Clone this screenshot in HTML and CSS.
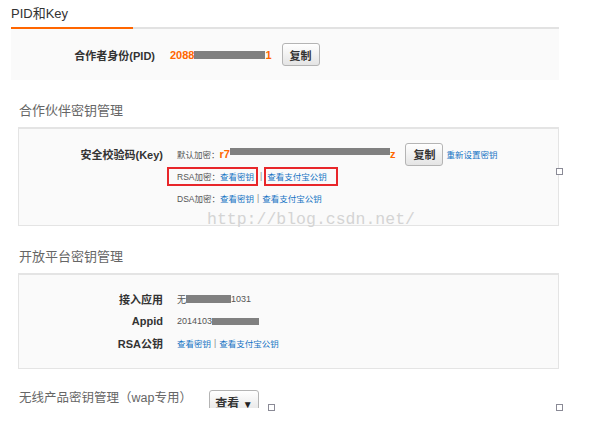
FILE: index.html
```html
<!DOCTYPE html>
<html lang="zh-CN">
<head>
  <meta charset="UTF-8" />
  <title>PID和Key</title>
  <link rel="stylesheet" href="styles.css">
</head>
<body>
  <div class="page">
    <div class="tabs">
      <div class="tab">PID和Key</div>
      <div class="tab-rest"></div>
    </div>

    <div class="box box-pid">
      <div class="row">
        <div class="label">合作者身份(PID)</div>
        <div class="value">
          <span class="orange">2088</span><span class="mask mask-pid"></span><span class="orange">1</span>
          <button class="btn">复制</button>
        </div>
      </div>
    </div>

    <h2 class="section-title">合作伙伴密钥管理</h2>
    <div class="box box-key">
      <div class="row">
        <div class="label">安全校验码(Key)</div>
        <div class="value small">
          默认加密：<span class="orange">r7</span><span class="mask mask-key"></span><span class="orange">z</span>
          <button class="btn">复制</button>
          <a class="link reset" href="#">重新设置密钥</a>
        </div>
      </div>
      <div class="row">
        <div class="label"></div>
        <div class="value small">
          <span class="mark mark-first">RSA加密：<a class="link" href="#">查看密钥</a></span><span class="sep sep-tight">|</span><span class="mark mark-second"><a class="link" href="#">查看支付宝公钥</a></span>
        </div>
      </div>
      <div class="row">
        <div class="label"></div>
        <div class="value small">
          DSA加密：<a class="link" href="#">查看密钥</a><span class="sep">|</span><a class="link" href="#">查看支付宝公钥</a>
        </div>
      </div>
      <div class="watermark">http://blog.csdn.net/</div>
    </div>

    <h2 class="section-title">开放平台密钥管理</h2>
    <div class="box box-open">
      <div class="row">
        <div class="label">接入应用</div>
        <div class="value small grey">无<span class="mask mask-app"></span>1031</div>
      </div>
      <div class="row">
        <div class="label">Appid</div>
        <div class="value small grey">2014103<span class="mask mask-appid"></span></div>
      </div>
      <div class="row">
        <div class="label">RSA公钥</div>
        <div class="value small">
          <a class="link" href="#">查看密钥</a><span class="sep">|</span><a class="link" href="#">查看支付宝公钥</a>
        </div>
      </div>
    </div>

    <div class="wap">
      <h2 class="section-title">无线产品密钥管理（wap专用）</h2>
      <button class="btn btn-drop">查看 <span class="caret">▼</span></button>
    </div>
  </div>

  <span class="handle handle-mid"></span>
  <span class="handle handle-bottom-c"></span>
  <span class="handle handle-bottom-r"></span>
</body>
</html>
```

FILE: styles.css
```css
body {
  margin: 0;
  font-family: "Liberation Sans", "Noto Sans CJK SC", sans-serif;
  color: #333;
  background: #fff;
}

.page {
  position: relative;
  height: 408px;
  overflow: hidden;
}

.tabs {
  display: flex;
  margin-left: 11px;
  width: 548px;
}

.tab {
  width: 122px;
  font-size: 13px;
  line-height: 27px;
  color: #333;
  border-bottom: 2px solid #f60;
}

.tab-rest {
  flex: 1;
  border-bottom: 2px solid #e2e2e2;
}

.box {
  position: relative;
  background: #fafafa;
  border: 1px solid #e4e4e4;
  border-top: 2px solid #e4e4e4;
  margin-left: 18px;
  width: 539px;
}

.box-pid {
  margin-left: 11px;
  width: 548px;
  border: none;
  height: 51px;
  display: flex;
  align-items: center;
}

.box-key {
  padding: 14px 0 16px;
}

.box-open {
  padding: 13px 0 14px;
}

.row {
  display: flex;
  align-items: center;
  height: 22px;
}

.label {
  width: 144px;
  flex: none;
  text-align: right;
  font-size: 11px;
  font-weight: bold;
  color: #333;
}

.value {
  display: flex;
  align-items: center;
  margin-left: 14px;
  font-size: 11px;
  white-space: nowrap;
}

.box-pid .value {
  margin-left: 15px;
}

.small {
  font-size: 8.5px;
  color: #555;
}

.grey {
  font-size: 9px;
  color: #555;
}

.orange {
  color: #f60;
  font-weight: bold;
  font-size: 11px;
}

.mask {
  display: inline-block;
  height: 8px;
  background: #808080;
}

.mask-pid { width: 71px; }
.mask-key { width: 160px; height: 7px; margin-top: -6px; }
.mask-app { width: 45px; }
.mask-appid { width: 47px; height: 7px; }

.btn {
  font-family: "Liberation Sans", "Noto Sans CJK SC", sans-serif;
  font-size: 11px;
  font-weight: bold;
  color: #333;
  height: 23px;
  padding: 0 7px;
  background: linear-gradient(#ffffff, #e4e4e4);
  border: 1px solid #b4b4b4;
  border-radius: 3px;
  margin-left: 10px;
}

.link {
  color: #1574c4;
  text-decoration: none;
}

.reset {
  margin-left: 3px;
}

.sep {
  color: #888;
  margin: 0 3px;
}

.sep-tight {
  margin: 0 2px;
}

.mark {
  border: 2px solid #e8262a;
  height: 15px;
  display: flex;
  align-items: center;
}

.mark-first {
  margin-left: -10px;
  padding: 0 0 0 8px;
  width: 79px;
}

.mark-second {
  padding: 0 9px 0 1px;
}

.watermark {
  position: absolute;
  left: 188px;
  top: 81px;
  font-family: "Liberation Mono", monospace;
  font-size: 16.5px;
  color: #d4d4d4;
  white-space: nowrap;
}

.section-title {
  margin: 21px 0 6px 19px;
  font-size: 13px;
  font-weight: normal;
  line-height: 20px;
  color: #666;
}

.wap {
  display: flex;
  align-items: flex-start;
  margin-top: 21px;
}

.wap .section-title {
  margin: 0 0 0 19px;
  line-height: 17px;
  font-size: 12.5px;
}

.btn-drop {
  margin-left: 17px;
  width: 50px;
  height: 24px;
  font-size: 12px;
  padding: 0;
  flex: none;
}

.caret {
  font-size: 10px;
  color: #222;
}

.handle {
  position: absolute;
  width: 5px;
  height: 5px;
  border: 1px solid #8a8a96;
  background: #fff;
}

.handle-mid { left: 556px; top: 168px; }
.handle-bottom-c { left: 268px; top: 404px; }
.handle-bottom-r { left: 556px; top: 404px; }
```
